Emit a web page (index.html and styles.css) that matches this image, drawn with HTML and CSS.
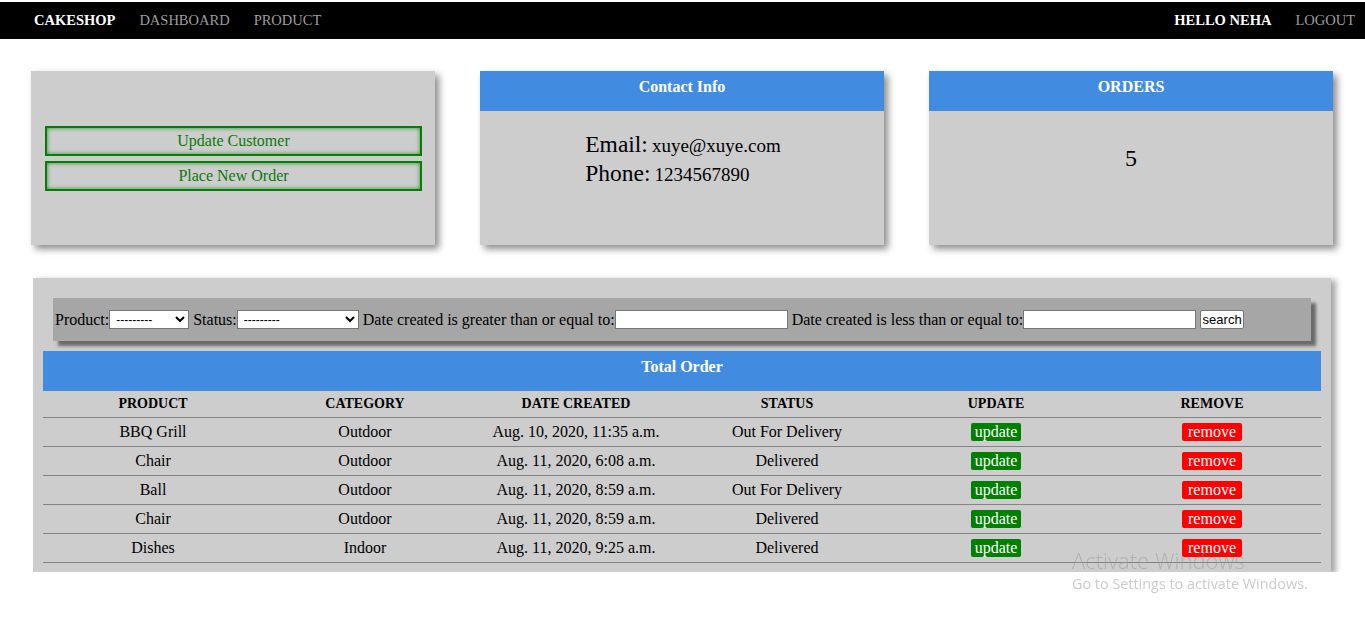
FILE: index.html
```html
<!DOCTYPE html>
<html>
<head>
<meta charset="utf-8">
<title>CakeShop</title>
<link rel="stylesheet" href="styles.css">
</head>
<body>
<nav class="navbar">
  <div class="nav-left">
    <a class="brand">CAKESHOP</a>
    <a class="nav-link">DASHBOARD</a>
    <a class="nav-link">PRODUCT</a>
  </div>
  <div class="nav-right">
    <span class="hello">HELLO NEHA</span>
    <a class="nav-link">LOGOUT</a>
  </div>
</nav>

<div class="cards">
  <div class="card card-actions">
    <button class="btn-outline">Update Customer</button>
    <button class="btn-outline">Place New Order</button>
  </div>
  <div class="card">
    <div class="card-header">Contact Info</div>
    <div class="card-body contact">
      <div class="contact-text">
        <div><span class="label">Email:</span> <span class="value">xuye@xuye.com</span></div>
        <div><span class="label">Phone:</span> <span class="value">1234567890</span></div>
      </div>
    </div>
  </div>
  <div class="card">
    <div class="card-header">ORDERS</div>
    <div class="card-body orders">5</div>
  </div>
</div>

<section class="orders-section">
  <form class="filter">
    <label>Product:</label><select class="sel-product"><option>---------</option></select>
    <label>Status:</label><select class="sel-status"><option>---------</option></select>
    <label>Date created is greater than or equal to:</label><input type="text" class="date-input">
    <label>Date created is less than or equal to:</label><input type="text" class="date-input">
    <button type="button" class="search-btn">search</button>
  </form>
  <div class="table-header">Total Order</div>
  <table class="order-table">
    <colgroup>
      <col class="c1"><col class="c2"><col class="c3"><col class="c4"><col class="c5"><col class="c6">
    </colgroup>
    <thead>
      <tr><th>PRODUCT</th><th>CATEGORY</th><th>DATE CREATED</th><th>STATUS</th><th>UPDATE</th><th>REMOVE</th></tr>
    </thead>
    <tbody>
      <tr><td>BBQ Grill</td><td>Outdoor</td><td>Aug. 10, 2020, 11:35 a.m.</td><td>Out For Delivery</td><td><a class="tag tag-update">update</a></td><td><a class="tag tag-remove">remove</a></td></tr>
      <tr><td>Chair</td><td>Outdoor</td><td>Aug. 11, 2020, 6:08 a.m.</td><td>Delivered</td><td><a class="tag tag-update">update</a></td><td><a class="tag tag-remove">remove</a></td></tr>
      <tr><td>Ball</td><td>Outdoor</td><td>Aug. 11, 2020, 8:59 a.m.</td><td>Out For Delivery</td><td><a class="tag tag-update">update</a></td><td><a class="tag tag-remove">remove</a></td></tr>
      <tr><td>Chair</td><td>Outdoor</td><td>Aug. 11, 2020, 8:59 a.m.</td><td>Delivered</td><td><a class="tag tag-update">update</a></td><td><a class="tag tag-remove">remove</a></td></tr>
      <tr><td>Dishes</td><td>Indoor</td><td>Aug. 11, 2020, 9:25 a.m.</td><td>Delivered</td><td><a class="tag tag-update">update</a></td><td><a class="tag tag-remove">remove</a></td></tr>
    </tbody>
  </table>
</section>

<div class="activate">
  <div class="act-title">Activate Windows</div>
  <div class="act-sub">Go to Settings to activate Windows.</div>
</div>
</body>
</html>
```

FILE: styles.css
```css
* { box-sizing: border-box; }
html, body { margin: 0; padding: 0; background: #fff; }
body {
  font-family: "Liberation Serif", "Times New Roman", serif;
  color: #000;
  padding-top: 2px;
}

.navbar {
  background: #000;
  height: 37px;
  display: flex;
  justify-content: space-between;
  align-items: center;
  padding: 0 10px 0 22px;
  font-size: 14.5px;
}
.nav-left, .nav-right { display: flex; align-items: center; }
.brand { color: #fff; font-weight: bold; padding: 0 12px; }
.nav-link { color: #9d9d9d; padding: 0 12px; }
.nav-right .nav-link { padding-right: 0; }
.hello { color: #fff; font-weight: bold; padding: 0 12px; }

.cards {
  display: grid;
  grid-template-columns: repeat(3, 1fr);
  column-gap: 45px;
  padding: 0 32px 0 31px;
  margin-top: 32px;
}
.card {
  min-width: 0;
  height: 174px;
  background: #cdcdcd;
  box-shadow: 4px 4px 7px rgba(0,0,0,0.45);
}
.card-actions {
  display: flex;
  flex-direction: column;
  justify-content: center;
  gap: 5px;
  padding: 0 13px 0 14px;
}
.btn-outline {
  display: block;
  width: 100%;
  height: 30px;
  background: #cdcdcd;
  border: 2px solid #008000;
  box-shadow: inset 0 0 4px #2f8f2f;
  color: #0a7a0a;
  font-family: "Liberation Serif", serif;
  font-size: 16px;
  padding: 0;
}
.card-header {
  background: #418ce0;
  color: #fff;
  height: 40px;
  padding-top: 6px;
  line-height: 20px;
  text-align: center;
  font-weight: bold;
  font-size: 16px;
}
.card-body { text-align: center; }
.contact { padding-top: 20px; }
.contact-text {
  display: inline-block;
  text-align: left;
  line-height: 27px;
  margin-left: 2px;
}
.contact .label { font-size: 23.5px; }
.contact .value { font-size: 19px; }
.orders { padding-top: 33px; font-size: 24px; line-height: 28px; }

.orders-section {
  margin: 33px 34px 0 33px;
  background: #cdcdcd;
  padding: 20px 10px 9px 10px;
  box-shadow: 5px 2px 6px rgba(0,0,0,0.35);
}
.filter {
  margin: 0 10px;
  background: #a6a6a6;
  height: 43px;
  padding: 0 2px;
  display: flex;
  align-items: center;
  font-size: 16px;
  line-height: 19px;
  box-shadow: 5px 5px 3px #6a6a6a;
  white-space: nowrap;
}
.filter select, .filter input, .filter button {
  height: 19px;
  border: 1px solid #767676;
  background: #fff;
  font-family: "Liberation Sans", Arial, sans-serif;
  font-size: 12px;
  margin: 0 4px 0 0;
  padding: 0 2px;
  flex: none;
}
.sel-product { width: 80px; }
.sel-status { width: 122px; }
.date-input { width: 173px; }
.search-btn {
  width: 44px;
  border-radius: 2px;
  font-size: 13px !important;
  padding: 0 !important;
  color: #000;
}
.table-header {
  margin-top: 10px;
  background: #418ce0;
  color: #fff;
  height: 40px;
  padding-top: 6px;
  line-height: 20px;
  text-align: center;
  font-weight: bold;
  font-size: 16px;
}
.order-table {
  width: 100%;
  border-collapse: collapse;
  table-layout: fixed;
  text-align: center;
}
.c1 { width: 220px; }
.c2 { width: 204px; }
.c3 { width: 218px; }
.c4 { width: 204px; }
.c5 { width: 214px; }
.c6 { width: 218px; }
.order-table th {
  font-size: 14px;
  font-weight: bold;
  height: 26px;
  padding: 0;
  line-height: 16px;
  border-bottom: 1px solid #848484;
}
.order-table td {
  font-size: 16px;
  height: 29px;
  padding: 0;
  line-height: 18px;
  border-bottom: 1px solid #848484;
}
.tag {
  display: inline-block;
  color: #fff;
  border-radius: 2px;
  height: 18px;
  line-height: 18px;
  font-size: 16px;
  vertical-align: middle;
}
.tag-update { background: #008000; padding: 0 4px; }
.tag-remove { background: #ff0000; padding: 0 6px; }

.activate {
  position: fixed;
  left: 1072px;
  top: 546px;
  font-family: "Open Sans", "Noto Sans", sans-serif;
  color: rgba(150,150,150,0.5);
  pointer-events: none;
}
.act-title { font-size: 22px; line-height: 28px; font-weight: 300; }
.act-sub { font-size: 14.4px; line-height: 20px; }
```
